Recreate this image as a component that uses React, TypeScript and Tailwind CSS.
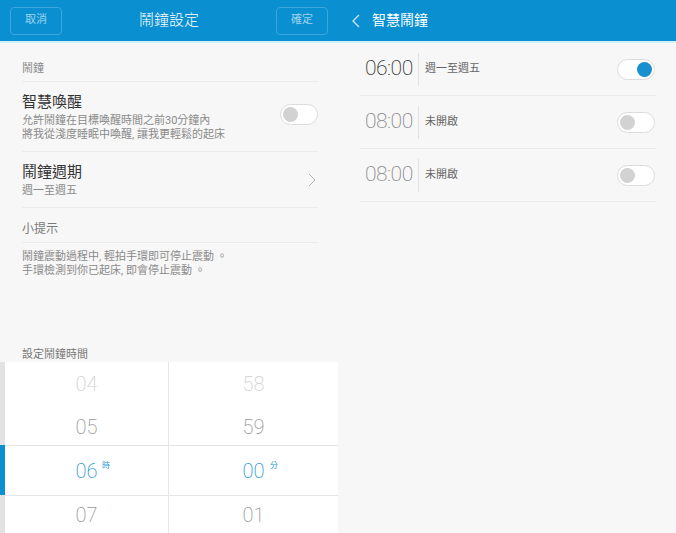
const FONT = "font-['Roboto','Noto_Sans_CJK_TC',sans-serif]";

const Toggle = ({ on }: { on: boolean }) => (
  <div className="w-[38px] h-[21px] rounded-full border border-[#dcdcdc] bg-white flex items-center px-[2px]">
    <div
      className={
        on
          ? "w-[15px] h-[15px] rounded-full bg-[#1a8fcf] ml-auto"
          : "w-[15px] h-[15px] rounded-full bg-[#d2d2d2]"
      }
    />
  </div>
);

const Divider = () => <div className="h-px bg-[#ebebeb]" />;

const LeftPanel = () => (
  <div className="w-[338px] h-full flex flex-col bg-[#f7f7f7]">
    {/* header */}
    <div className="h-[41px] bg-[#0a8fd1] flex items-center justify-between px-[10px]">
      <div className="w-[52px] h-[28px] rounded-[4px] border border-[#3aa6dc] flex items-center justify-center text-[11px] text-[#9fd3ee]">
        取消
      </div>
      <div className="text-[15px] font-light text-white">鬧鐘設定</div>
      <div className="w-[52px] h-[28px] rounded-[4px] border border-[#3aa6dc] flex items-center justify-center text-[11px] text-[#9fd3ee]">
        確定
      </div>
    </div>
    <div className="h-[2px] bg-[#d3f1fc]" />

    <div className="pl-[22px] pr-[20px]">
      <div className="h-[38px] flex items-end pb-[5px] text-[11px] leading-[14px] text-[#888]">鬧鐘</div>
      <Divider />
      <div className="flex items-center pt-[10px] pb-[9px]">
        <div className="flex-1">
          <div className="text-[15px] leading-[20px] text-[#333]">智慧喚醒</div>
          <div className="mt-[2px] text-[11px] leading-[14px] text-[#8a8a8a]">允許鬧鐘在目標喚醒時間之前30分鐘內</div>
          <div className="text-[11px] leading-[14px] text-[#8a8a8a]">將我從淺度睡眠中喚醒, 讓我更輕鬆的起床</div>
        </div>
        <div className="mb-[6px]">
          <Toggle on={false} />
        </div>
      </div>
      <Divider />
      <div className="flex items-center pt-[10px] pb-[9px]">
        <div className="flex-1">
          <div className="text-[15px] leading-[20px] text-[#333]">鬧鐘週期</div>
          <div className="mt-[2px] text-[11px] leading-[14px] text-[#8a8a8a]">週一至週五</div>
        </div>
        <svg width="8" height="14" viewBox="0 0 8 14" className="mr-[2px]">
          <path d="M1 1l6 6-6 6" fill="none" stroke="#b0b0b0" strokeWidth="1" />
        </svg>
      </div>
      <Divider />
      <div className="h-[34px] flex items-end pb-[5px] text-[12px] leading-[15px] text-[#777]">小提示</div>
      <Divider />
      <div className="pt-[7px] text-[11px] leading-[14px] text-[#8a8a8a]">
        <div>鬧鐘震動過程中, 輕拍手環即可停止震動 。</div>
        <div>手環檢測到你已起床, 即會停止震動 。</div>
      </div>
      <div className="mt-[70px] text-[11px] leading-[14px] text-[#777]">設定鬧鐘時間</div>
    </div>

    {/* picker */}
    <div className="mt-auto h-[171px] bg-white flex">
      <div className="w-[5px] flex flex-col">
        <div className="h-[83px] bg-[#e2e2e2]" />
        <div className="h-[50px] bg-[#0a8fd1]" />
        <div className="flex-1 bg-[#e2e2e2]" />
      </div>
      <div className="flex-1 flex flex-col">
        <PickerRow a="04" b="58" tone="faint" h="h-[43px]" />
        <PickerRow a="05" b="59" tone="mid" h="h-[40px]" pad />
        <div className="h-px bg-[#e6e6e6]" />
        <PickerRow a="06" b="00" tone="sel" h="h-[49px]" />
        <div className="h-px bg-[#e6e6e6]" />
        <PickerRow a="07" b="01" tone="mid" h="flex-1" />
      </div>
    </div>
  </div>
);

const PickerRow = ({
  a,
  b,
  tone,
  h,
  pad = false,
}: {
  a: string;
  b: string;
  tone: "faint" | "mid" | "sel";
  h: string;
  pad?: boolean;
}) => {
  const color = tone === "faint" ? "text-[#cfcfcf]" : tone === "mid" ? "text-[#999]" : "text-[#2b9ad6]";
  const p = pad ? "pt-[4px]" : "";
  return (
    <div className={`flex ${h}`}>
      <div className={`w-[164px] border-r border-[#e6e6e6] flex items-center justify-center relative ${p} ${color}`}>
        <span className="text-[20px] font-extralight">{a}</span>
        {tone === "sel" && <span className="absolute left-[97px] top-[14px] text-[8px]">時</span>}
      </div>
      <div className={`flex-1 flex items-center justify-center relative ${p} ${color}`}>
        <span className="text-[20px] font-extralight">{b}</span>
        {tone === "sel" && <span className="absolute left-[101px] top-[14px] text-[8px]">分</span>}
      </div>
    </div>
  );
};

const AlarmRow = ({ time, label, on }: { time: string; label: string; on: boolean }) => (
  <div className="h-[53px] flex items-center pl-[5px] pr-px border-b border-[#ebebeb]">
    <span className={`w-[48px] text-[21px] font-extralight tracking-[-0.5px] ${on ? "text-[#333]" : "text-[#888]"}`}>{time}</span>
    <div className="ml-[5px] w-px h-[33px] bg-[#e2e2e2]" />
    <span className="ml-[6px] flex-1 text-[11px] text-[#666]">{label}</span>
    <Toggle on={on} />
  </div>
);

const RightPanel = () => (
  <div className="w-[338px] h-full flex flex-col bg-[#f7f7f7]">
    <div className="h-[41px] bg-[#0a8fd1] flex items-center pl-[14px]">
      <svg width="8" height="14" viewBox="0 0 8 14">
        <path d="M7 1L1 7l6 6" fill="none" stroke="#cfe9f7" strokeWidth="1.3" />
      </svg>
      <span className="ml-[12px] text-[14px] text-white">智慧鬧鐘</span>
    </div>
    <div className="h-[2px] bg-[#d3f1fc]" />
    <div className="pl-[22px] pr-[20px]">
      <AlarmRow time="06:00" label="週一至週五" on />
      <AlarmRow time="08:00" label="未開啟" on={false} />
      <AlarmRow time="08:00" label="未開啟" on={false} />
    </div>
  </div>
);

export default function App() {
  return (
    <div className={`w-[676px] h-[533px] flex overflow-hidden ${FONT}`}>
      <LeftPanel />
      <RightPanel />
    </div>
  );
}
